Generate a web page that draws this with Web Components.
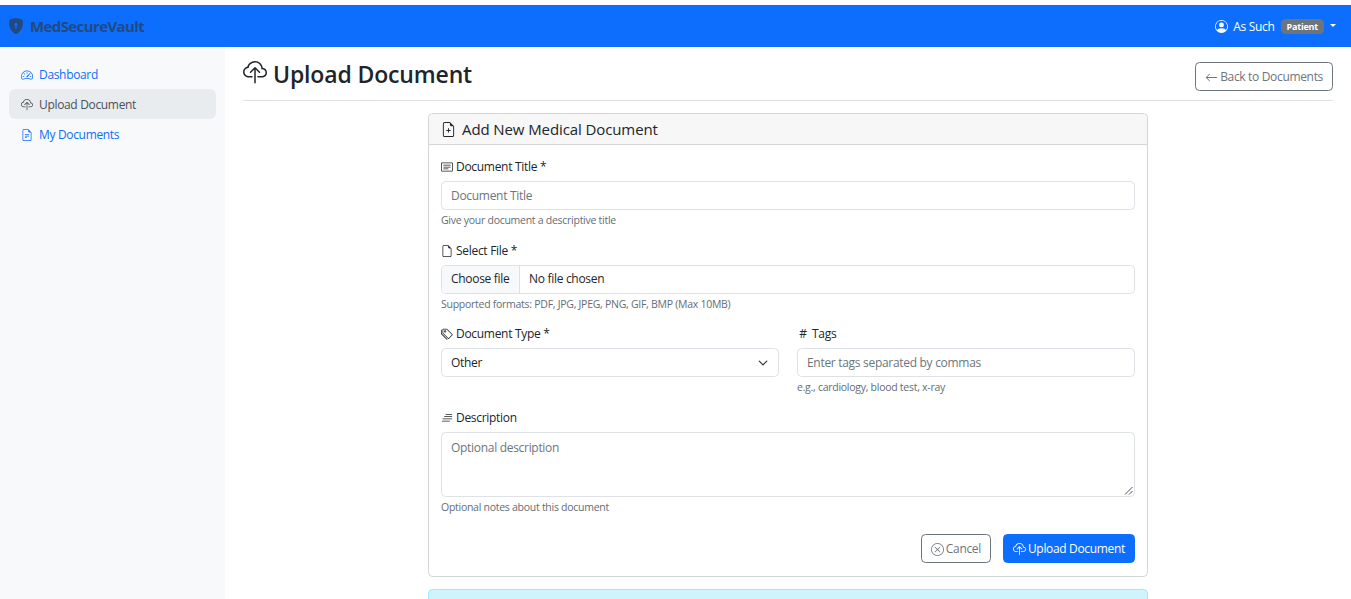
<!DOCTYPE html>
<html lang="en">
<head>
<meta charset="utf-8">
<title>MedSecureVault</title>
<style>
html, body { margin: 0; height: 100%; overflow: hidden; background: #fff; }
body { font: 12px/18px "Open Sans", "Noto Sans", sans-serif; color: #212529; }
</style>
</head>
<body>
<app-shell>
    <top-bar slot="bar"></top-bar>
    <side-nav slot="side"></side-nav>
    <upload-page></upload-page>
</app-shell>

<script>
const EARMARK = 'M14 4.5V14a2 2 0 0 1-2 2H4a2 2 0 0 1-2-2V2a2 2 0 0 1 2-2h5.5L14 4.5zm-3 0A1.5 1.5 0 0 1 9.5 3V1H4a1 1 0 0 0-1 1v12a1 1 0 0 0 1 1h8a1 1 0 0 0 1-1V4.5h-2z';

const ICONS = {
    shield: ['M8 0c-.69 0-1.843.265-2.928.56-1.11.3-2.229.655-2.887.87a1.54 1.54 0 0 0-1.044 1.262c-.596 4.477.787 7.795 2.465 9.99a11.777 11.777 0 0 0 2.517 2.453c.386.273.744.482 1.048.625.28.132.581.24.829.24s.548-.108.829-.24a7.159 7.159 0 0 0 1.048-.625 11.775 11.775 0 0 0 2.517-2.453c1.678-2.195 3.061-5.513 2.465-9.99a1.541 1.541 0 0 0-1.044-1.263 62.467 62.467 0 0 0-2.887-.87C9.843.266 8.69 0 8 0zm0 5a1.5 1.5 0 0 1 .5 2.915l.385 1.99a.5.5 0 0 1-.491.595h-.788a.5.5 0 0 1-.49-.595l.384-1.99A1.5 1.5 0 0 1 8 5z'],
    gauge: ['M8 4a.5.5 0 0 1 .5.5V6a.5.5 0 0 1-1 0V4.5A.5.5 0 0 1 8 4zM3.732 5.732a.5.5 0 0 1 .707 0l.915.914a.5.5 0 1 1-.708.708l-.914-.915a.5.5 0 0 1 0-.707zM2 10a.5.5 0 0 1 .5-.5h1.586a.5.5 0 0 1 0 1H2.5A.5.5 0 0 1 2 10zm9.5 0a.5.5 0 0 1 .5-.5h1.5a.5.5 0 0 1 0 1H12a.5.5 0 0 1-.5-.5zm.754-4.246a.389.389 0 0 0-.527-.02L7.547 9.31a.91.91 0 1 0 1.302 1.258l3.434-4.297a.389.389 0 0 0-.029-.518z', 'M0 10a8 8 0 1 1 15.547 2.661c-.442 1.253-1.845 1.602-2.932 1.25C11.309 13.488 9.475 13 8 13c-1.474 0-3.31.488-4.615.911-1.087.352-2.49.003-2.932-1.25A7.988 7.988 0 0 1 0 10zm8-7a7 7 0 0 0-6.603 9.329c.203.575.923.876 1.68.63C4.397 12.533 6.358 12 8 12s3.604.532 4.923.96c.757.245 1.477-.056 1.68-.631A7 7 0 0 0 8 3z'],
    cloud: ['M4.406 1.342A5.53 5.53 0 0 1 8 0c2.69 0 4.923 2 5.166 4.579C14.758 4.804 16 6.137 16 7.773 16 9.569 14.502 11 12.687 11H10a.5.5 0 0 1 0-1h2.688C13.979 10 15 8.988 15 7.773c0-1.216-1.02-2.228-2.313-2.228h-.5v-.5C12.188 2.825 10.328 1 8 1a4.53 4.53 0 0 0-2.941 1.1c-.757.652-1.153 1.438-1.153 2.055v.448l-.445.049C2.064 4.805 1 5.952 1 7.318 1 8.785 2.23 10 3.781 10H6a.5.5 0 0 1 0 1H3.781C1.708 11 0 9.366 0 7.318c0-1.763 1.266-3.223 2.942-3.593.143-.863.698-1.723 1.464-2.383z', 'M7.646 4.146a.5.5 0 0 1 .708 0l3 3a.5.5 0 0 1-.708.708L8.5 5.707V14.5a.5.5 0 0 1-1 0V5.707L5.354 7.854a.5.5 0 1 1-.708-.708l3-3z'],
    doc: [EARMARK, 'M5.5 7a.5.5 0 0 0 0 1h5a.5.5 0 0 0 0-1h-5zM5 9.5a.5.5 0 0 1 .5-.5h5a.5.5 0 0 1 0 1h-5a.5.5 0 0 1-.5-.5zm0 2a.5.5 0 0 1 .5-.5h2a.5.5 0 0 1 0 1h-2a.5.5 0 0 1-.5-.5z'],
    docPlus: [EARMARK, 'M8 6.5a.5.5 0 0 1 .5.5v1.5H10a.5.5 0 0 1 0 1H8.5V11a.5.5 0 0 1-1 0V9.5H6a.5.5 0 0 1 0-1h1.5V7a.5.5 0 0 1 .5-.5z'],
    file: [EARMARK],
    card: ['M14.5 3a.5.5 0 0 1 .5.5v9a.5.5 0 0 1-.5.5h-13a.5.5 0 0 1-.5-.5v-9a.5.5 0 0 1 .5-.5h13zm-13-1A1.5 1.5 0 0 0 0 3.5v9A1.5 1.5 0 0 0 1.5 14h13a1.5 1.5 0 0 0 1.5-1.5v-9A1.5 1.5 0 0 0 14.5 2h-13z', 'M3 5.5a.5.5 0 0 1 .5-.5h9a.5.5 0 0 1 0 1h-9a.5.5 0 0 1-.5-.5zM3 8a.5.5 0 0 1 .5-.5h9a.5.5 0 0 1 0 1h-9A.5.5 0 0 1 3 8zm0 2.5a.5.5 0 0 1 .5-.5h6a.5.5 0 0 1 0 1h-6a.5.5 0 0 1-.5-.5z'],
    tags: ['M3 2v4.586l7 7L14.586 9l-7-7H3zM2 2a1 1 0 0 1 1-1h4.586a1 1 0 0 1 .707.293l7 7a1 1 0 0 1 0 1.414l-4.586 4.586a1 1 0 0 1-1.414 0l-7-7A1 1 0 0 1 2 6.586V2z', 'M5.5 5a.5.5 0 1 1 0-1 .5.5 0 0 1 0 1zm0 1a1.5 1.5 0 1 0 0-3 1.5 1.5 0 0 0 0 3zM1 7.086a1 1 0 0 0 .293.707L8.75 15.25l-.043.043a1 1 0 0 1-1.414 0l-7-7A1 1 0 0 1 0 7.586V3a1 1 0 0 1 1-1v5.086z'],
    lines: ['M6 3a.5.5 0 0 1 .5-.5h8a.5.5 0 0 1 0 1h-8A.5.5 0 0 1 6 3zM4 6a.5.5 0 0 1 .5-.5h10a.5.5 0 0 1 0 1h-10A.5.5 0 0 1 4 6zM2 9a.5.5 0 0 1 .5-.5h12a.5.5 0 0 1 0 1h-12A.5.5 0 0 1 2 9zM1 12a.5.5 0 0 1 .5-.5h10a.5.5 0 0 1 0 1h-10A.5.5 0 0 1 1 12z'],
    arrow: ['M15 8a.5.5 0 0 0-.5-.5H2.707l3.147-3.146a.5.5 0 1 0-.708-.708l-4 4a.5.5 0 0 0 0 .708l4 4a.5.5 0 0 0 .708-.708L2.707 8.5H14.5A.5.5 0 0 0 15 8z'],
    cancel: ['M8 15A7 7 0 1 1 8 1a7 7 0 0 1 0 14zm0 1A8 8 0 1 0 8 0a8 8 0 0 0 0 16z', 'M4.646 4.646a.5.5 0 0 1 .708 0L8 7.293l2.646-2.647a.5.5 0 0 1 .708.708L8.707 8l2.647 2.646a.5.5 0 0 1-.708.708L8 8.707l-2.646 2.647a.5.5 0 0 1-.708-.708L7.293 8 4.646 5.354a.5.5 0 0 1 0-.708z'],
    person: ['M11 6a3 3 0 1 1-6 0 3 3 0 0 1 6 0z', 'M0 8a8 8 0 1 1 16 0A8 8 0 0 1 0 8zm8-7a7 7 0 0 0-5.468 11.37C3.242 11.226 4.805 10 8 10s4.757 1.225 5.468 2.37A7 7 0 0 0 8 1z']
};

function icon(name, size) {
    const paths = ICONS[name].map(d => `<path d="${d}" fill="currentColor" fill-rule="evenodd"/>`).join('');
    return `<svg viewBox="0 0 16 16" width="${size}" height="${size}" aria-hidden="true">${paths}</svg>`;
}

class AppShell extends HTMLElement {
    constructor() {
        super();
        this.attachShadow({ mode: 'open' });
        this.shadowRoot.innerHTML = `
<style>
:host { display: grid; grid-template-columns: 225px 1fr; grid-template-rows: 42px 1fr; height: 100vh; padding-top: 5px; box-sizing: border-box; overflow: hidden; }
.bar { grid-column: 1 / 3; }
main { min-width: 0; overflow: hidden; padding: 0 18px; }
</style>
<div class="bar"><slot name="bar"></slot></div>
<slot name="side"></slot>
<main><slot></slot></main>`;
    }
}

class TopBar extends HTMLElement {
    constructor() {
        super();
        this.attachShadow({ mode: 'open' });
        this.shadowRoot.innerHTML = `
<style>
:host { display: flex; align-items: center; justify-content: space-between; height: 42px; background: #0d6efd; padding: 0 15px 0 8px; box-sizing: border-box; }
.brand { display: flex; align-items: center; gap: 6px; font-size: 15px; font-weight: 700; color: #234a80; letter-spacing: -.6px; }
.user { display: flex; align-items: center; color: #fff; }
.user svg { margin-right: 5px; }
.name { letter-spacing: -.33px; padding-top: 1px; }
.badge { background: #6c757d; color: #fff; font-size: 9px; font-weight: 700; line-height: 9px; padding: 3px 6px; border-radius: 4.5px; margin-left: 6px; letter-spacing: -.2px; }
.caret { width: 0; height: 0; border-top: 3.6px solid #fff; border-left: 3.6px solid transparent; border-right: 3.6px solid transparent; margin-left: 6px; margin-bottom: 1px; }
</style>
<div class="brand">${icon('shield', 16)}<span>MedSecureVault</span></div>
<div class="user">${icon('person', 13)}<span class="name">As Such</span><span class="badge">Patient</span><span class="caret"></span></div>`;
    }
}

class SideNav extends HTMLElement {
    constructor() {
        super();
        this.attachShadow({ mode: 'open' });
        this.shadowRoot.innerHTML = `
<style>
:host { display: block; background: #f8f9fa; padding: 12px 9px 0; }
a { display: flex; align-items: center; gap: 6px; height: 30px; padding: 2px 12px 0; border-radius: 6px; color: #0d6efd; text-decoration: none; letter-spacing: -.33px; box-sizing: border-box; }
a.active { background: #e9ecef; color: #495057; }
</style>
<a href="#">${icon('gauge', 12)}Dashboard</a>
<a href="#" class="active">${icon('cloud', 12)}Upload Document</a>
<a href="#">${icon('doc', 12)}My Documents</a>`;
    }
}

class FormField extends HTMLElement {
    constructor() {
        super();
        this.attachShadow({ mode: 'open' });
        const ic = this.getAttribute('icon');
        const label = this.getAttribute('label');
        const hint = this.getAttribute('hint');
        this.shadowRoot.innerHTML = `
<style>
:host { display: block; min-width: 0; }
label { display: flex; align-items: center; gap: 3px; height: 18px; margin-bottom: 5px; letter-spacing: -.3px; }
label svg { flex: none; }
small { display: block; font-size: 10.5px; line-height: 15px; margin-top: 3px; color: #646d75; letter-spacing: -.27px; }
</style>
<label>${ic === 'hash' ? '<span style="width:12px;text-align:center">#</span>' : icon(ic, 12)}<span>${label}</span></label>
<slot></slot>
${hint ? `<small>${hint}</small>` : ''}`;
    }
}

class FormControl extends HTMLElement {
    constructor() {
        super();
        this.attachShadow({ mode: 'open' });
        const kind = this.getAttribute('kind') || 'text';
        const text = this.getAttribute('text') || '';
        let body;
        if (kind === 'file') {
            body = `<span class="btn">Choose file</span><span class="val">No file chosen</span>`;
        } else if (kind === 'select') {
            body = `<span class="val">${text}</span><svg class="chev" viewBox="0 0 16 16" width="10" height="10"><path d="M2 5l6 6 6-6" fill="none" stroke="#343a40" stroke-width="2" stroke-linecap="round" stroke-linejoin="round"/></svg>`;
        } else if (kind === 'area') {
            body = `<span class="val ph">${text}</span><svg class="grip" viewBox="0 0 9 9" width="9" height="9"><path d="M8.5 1L1 8.5M8.5 5L5 8.5" stroke="#555" fill="none"/></svg>`;
        } else {
            body = `<span class="val ph">${text}</span>`;
        }
        this.shadowRoot.innerHTML = `
<style>
:host { display: flex; align-items: center; height: 29px; border: 1px solid #dee2e6; border-radius: 4.5px; box-sizing: border-box; background: #fff; position: relative; overflow: hidden; letter-spacing: -.3px; }
:host([kind=area]) { height: 65px; align-items: flex-start; }
.val { padding: 0 9px; color: #212529; white-space: nowrap; }
.btn + .val { padding-left: 8.5px; }
.ph { color: #6c757d; }
:host([kind=area]) .val { padding-top: 6px; }
.btn { background: #f8f9fa; border-right: 1px solid #dee2e6; padding: 0 10px 0 9px; height: 100%; display: flex; align-items: center; }
.chev { position: absolute; right: 10px; top: 9px; }
.grip { position: absolute; right: 1px; bottom: 1px; }
</style>${body}`;
    }
}

class ActionButton extends HTMLElement {
    constructor() {
        super();
        this.attachShadow({ mode: 'open' });
        this.shadowRoot.innerHTML = `
<style>
:host { display: inline-flex; align-items: center; height: 29px; padding: 1px 9px 0; gap: 2px; border: 1px solid #6c757d; border-radius: 4.5px; color: #6c757d; box-sizing: border-box; letter-spacing: -.33px; white-space: nowrap; }
:host([primary]) { background: #0d6efd; border-color: #0d6efd; color: #fff; }
</style>${icon(this.getAttribute('icon'), 13)}<slot></slot>`;
    }
}

class UploadPage extends HTMLElement {
    constructor() {
        super();
        this.attachShadow({ mode: 'open' });
        this.shadowRoot.innerHTML = `
<style>
:host { display: block; }
header { display: flex; justify-content: space-between; align-items: flex-end; height: 54px; border-bottom: 1px solid #dee2e6; padding-bottom: 9px; box-sizing: border-box; }
h1 { display: flex; align-items: center; gap: 6px; margin: 0 0 2px; font-size: 23px; line-height: 29px; font-weight: 600; letter-spacing: -.15px; color: #212529; }
h1 svg { margin-top: -3px; }
.card { width: 720px; margin: 12px auto 0; border: 1px solid #d4d5d6; border-radius: 4.5px; box-sizing: border-box; }
.head { display: flex; align-items: center; gap: 6px; height: 30px; padding: 0 12px; background: #f7f7f7; border-bottom: 1px solid #d4d5d6; border-radius: 4px 4px 0 0; font-size: 15px; font-weight: 500; letter-spacing: -.1px; }
.body { padding: 13px 12px 12px; display: flex; flex-direction: column; gap: 13.7px; height: 431px; box-sizing: border-box; }
.row { display: grid; grid-template-columns: 1fr 1fr; gap: 18px; }
.actions { display: flex; justify-content: flex-end; gap: 12px; margin-top: 5.3px; }
.alert { width: 720px; height: 40px; margin: 12px auto 0; background: #cff4fc; border: 1px solid #9eeaf9; border-radius: 4.5px; box-sizing: border-box; }
</style>
<header>
    <h1>${icon('cloud', 24)}Upload Document</h1>
    <action-button icon="arrow">Back to Documents</action-button>
</header>
<section class="card">
    <div class="head">${icon('docPlus', 15)}Add New Medical Document</div>
    <div class="body">
        <form-field icon="card" label="Document Title *" hint="Give your document a descriptive title"><form-control text="Document Title"></form-control></form-field>
        <form-field icon="file" label="Select File *" hint="Supported formats: PDF, JPG, JPEG, PNG, GIF, BMP (Max 10MB)"><form-control kind="file"></form-control></form-field>
        <div class="row">
            <form-field icon="tags" label="Document Type *"><form-control kind="select" text="Other"></form-control></form-field>
            <form-field icon="hash" label="Tags" hint="e.g., cardiology, blood test, x-ray"><form-control text="Enter tags separated by commas"></form-control></form-field>
        </div>
        <form-field icon="lines" label="Description" hint="Optional notes about this document"><form-control kind="area" text="Optional description"></form-control></form-field>
        <div class="actions">
            <action-button icon="cancel">Cancel</action-button>
            <action-button icon="cloud" primary>Upload Document</action-button>
        </div>
    </div>
</section>
<div class="alert"></div>`;
    }
}

// children first, so the page's own template finds them defined
customElements.define('form-field', FormField);
customElements.define('form-control', FormControl);
customElements.define('action-button', ActionButton);
customElements.define('top-bar', TopBar);
customElements.define('side-nav', SideNav);
customElements.define('upload-page', UploadPage);
customElements.define('app-shell', AppShell);
</script>
</body>
</html>
